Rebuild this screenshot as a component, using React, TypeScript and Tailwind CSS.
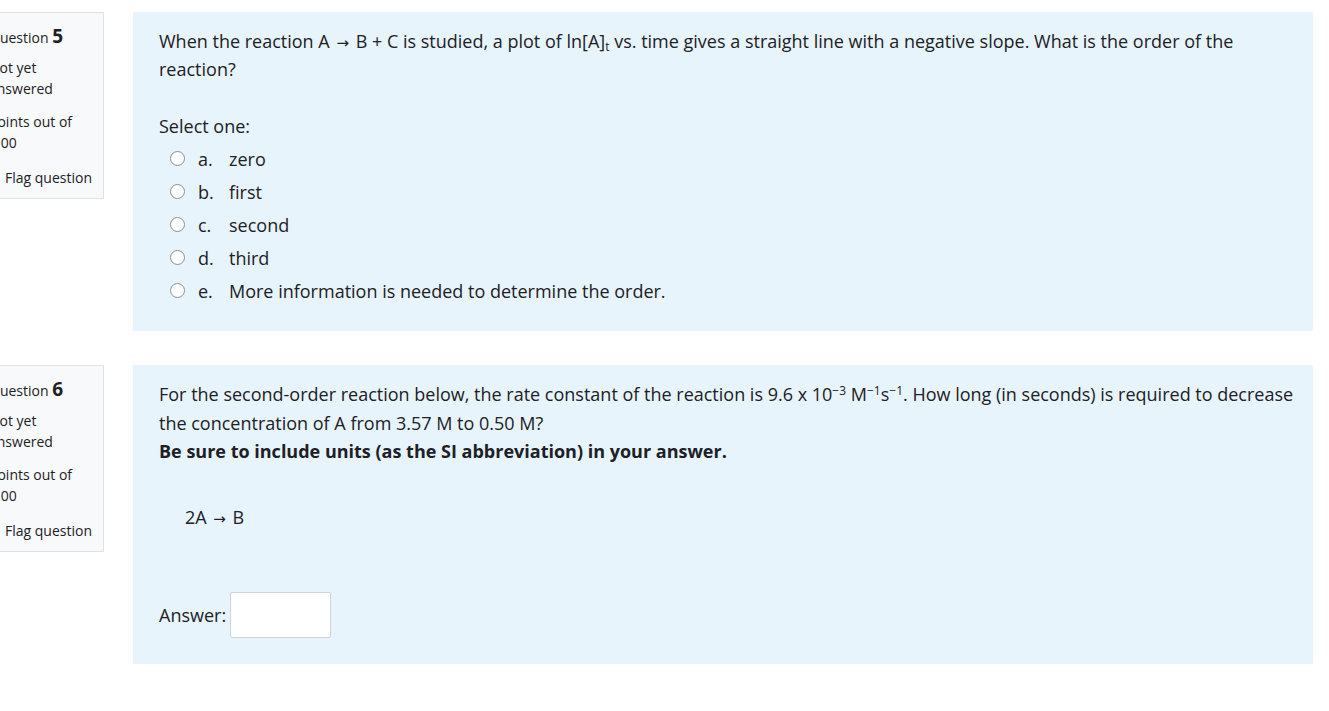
import React from 'react';

const options = [
  { letter: 'a.', text: 'zero' },
  { letter: 'b.', text: 'first' },
  { letter: 'c.', text: 'second' },
  { letter: 'd.', text: 'third' },
  { letter: 'e.', text: 'More information is needed to determine the order.' },
];

function Arrow() {
  return <span className="mx-[2px] font-['DejaVu_Sans',sans-serif] text-[15px] leading-none">→</span>;
}

function Info({ num }: { num: number }) {
  return (
    <div className="w-[124px] shrink-0 self-start border border-[#dee2e6] bg-[#f8f9fa] px-[8px] pt-[13px] pb-[10px] text-[14px] leading-[21px]">
      <h3 className="mb-[9px] whitespace-nowrap">
        Question <span className="text-[19px] font-bold">{num}</span>
      </h3>
      <div className="mb-[12px]">Not yet answered</div>
      <div className="mb-[14px]">Points out of 1.00</div>
      <div className="flex items-center gap-[6px] whitespace-nowrap">
        <span className="inline-block w-[10px]" />
        Flag question
      </div>
    </div>
  );
}

function Radio() {
  return <span className="inline-block h-[15px] w-[15px] rounded-full border-[1.5px] border-[#8a8f96] bg-white" />;
}

export default function App() {
  return (
    <div className="min-h-screen overflow-hidden bg-white pt-[12px] font-['Segoe_UI','Open_Sans',sans-serif] text-[#1d2125]">
      <div className="-ml-[20px] flex flex-col gap-[34px] pr-[16px]">
        {/* Question 5 */}
        <div className="flex gap-[29px]">
          <Info num={5} />
          <div className="flex-1 bg-[#e7f4fb] pl-[26px] pr-[16px] pt-[15px] pb-[24px] text-[18px] leading-[28px]">
            <p>
              When the reaction A <Arrow /> B + C is studied, a plot of ln[A]
              <sub className="text-[12px] leading-none">t</sub> vs. time gives a straight line with a negative slope. What
              is the order of the reaction?
            </p>
            <p className="mt-[29px] mb-[2px]">Select one:</p>
            <div className="flex flex-col">
              {options.map((o) => (
                <div key={o.letter} className="flex h-[33px] items-center pl-[11px]">
                  <Radio />
                  <span className="ml-[13px] w-[31px]">{o.letter}</span>
                  <span>{o.text}</span>
                </div>
              ))}
            </div>
          </div>
        </div>

        {/* Question 6 */}
        <div className="flex gap-[29px]">
          <Info num={6} />
          <div className="flex-1 bg-[#e7f4fb] pl-[26px] pr-[16px] pt-[15px] pb-[26px] text-[18px] leading-[28.5px]">
            <p>
              For the second-order reaction below, the rate constant of the reaction is 9.6 x 10
              <sup className="text-[12px] leading-none">−3</sup> M<sup className="text-[12px] leading-none">−1</sup>s
              <sup className="text-[12px] leading-none">−1</sup>. How long (in seconds) is required to decrease the
              concentration of A from 3.57 M to 0.50 M?
            </p>
            <p className="font-bold">Be sure to include units (as the SI abbreviation) in your answer.</p>
            <p className="mt-[37px] pl-[26px]">
              2A <Arrow /> B
            </p>
            <div className="mt-[61px] flex items-center gap-[4px]">
              <span>Answer:</span>
              <input
                type="text"
                className="h-[46px] w-[101px] rounded-[2px] border border-[#ced4da] bg-white px-2 outline-none"
              />
            </div>
          </div>
        </div>
      </div>
    </div>
  );
}
